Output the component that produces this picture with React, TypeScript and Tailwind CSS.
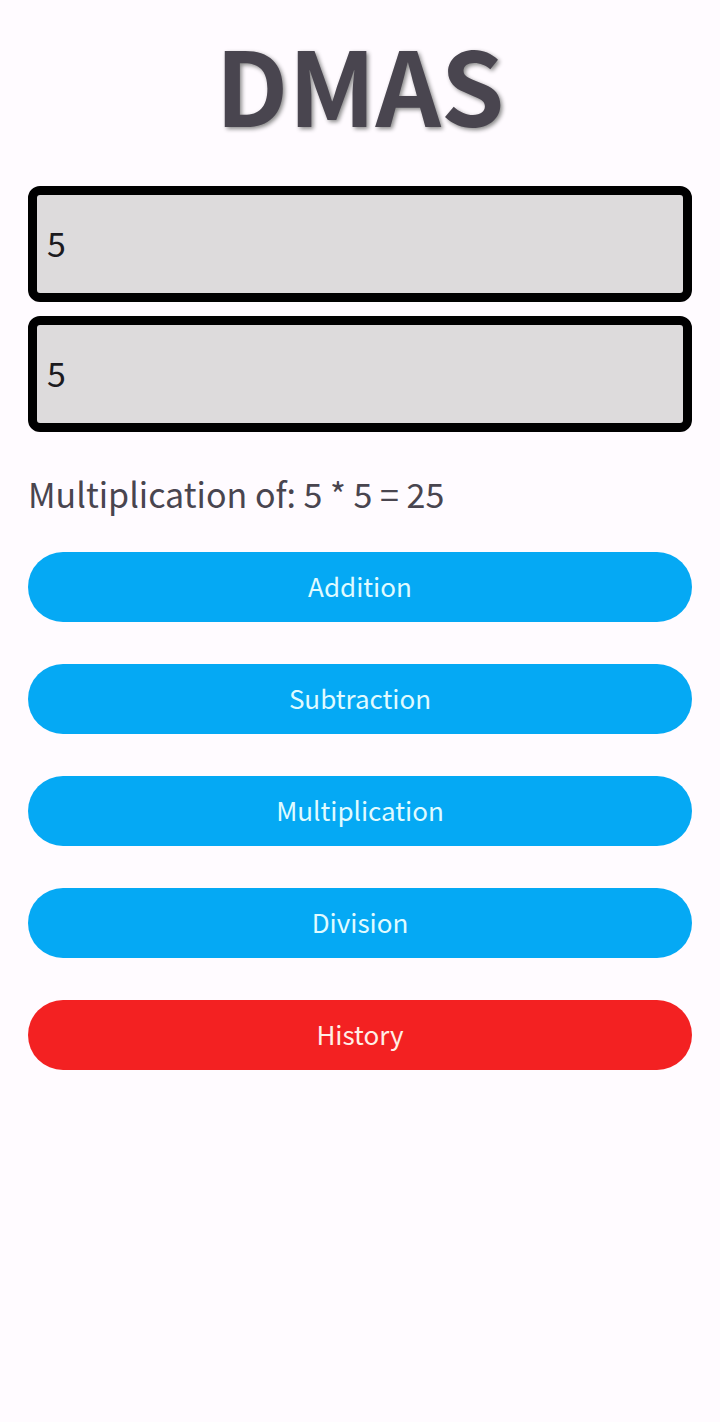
import { useState } from "react";

type Operation = { name: string; symbol: string; run: (a: number, b: number) => number };

const operations: Operation[] = [
  { name: "Addition", symbol: "+", run: (a, b) => a + b },
  { name: "Subtraction", symbol: "-", run: (a, b) => a - b },
  { name: "Multiplication", symbol: "*", run: (a, b) => a * b },
  { name: "Division", symbol: "/", run: (a, b) => a / b },
];

const fieldClass =
  "block h-[116px] w-full rounded-xl border-[9px] border-black bg-[#dddbdc] px-[10px] pb-1 text-[34px] text-[#1c1b1f] outline-none";
const buttonClass = "h-[70px] w-full rounded-full pb-1 text-[26px]";

export default function App() {
  const [first, setFirst] = useState("5");
  const [second, setSecond] = useState("5");
  const [operation, setOperation] = useState(operations[2]);

  return (
    <main className="min-h-screen bg-[#fffbff] px-7 pt-[18px] pb-7 font-['Noto_Sans_CJK_SC',sans-serif] text-[#49454f]">
      <h1 className="text-center text-[102px] leading-[130px] font-bold [text-shadow:2px_2px_4px_#888]">DMAS</h1>
      <div className="mt-[38px] flex flex-col gap-[14px]">
        <input aria-label="First number" inputMode="decimal" className={fieldClass} value={first} onChange={(e) => setFirst(e.target.value)} />
        <input aria-label="Second number" inputMode="decimal" className={fieldClass} value={second} onChange={(e) => setSecond(e.target.value)} />
      </div>
      <p className="mt-[38px] text-[34px] leading-[48px]">
        {`${operation.name} of: ${first} ${operation.symbol} ${second} = ${operation.run(Number(first), Number(second))}`}
      </p>
      <div className="mt-[34px] flex flex-col gap-[42px]">
        {operations.map((item) => (
          <button key={item.name} type="button" className={`${buttonClass} bg-[#05a9f4] text-[#e0fbff]`} onClick={() => setOperation(item)}>
            {item.name}
          </button>
        ))}
        <button type="button" className={`${buttonClass} bg-[#f32122] text-[#ffeee6]`}>History</button>
      </div>
    </main>
  );
}
